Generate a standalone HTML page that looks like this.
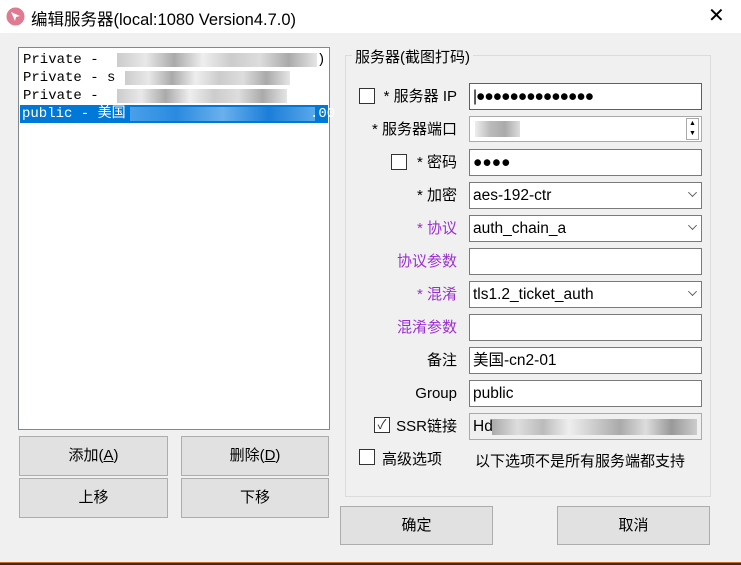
<!DOCTYPE html>
<html><head><meta charset="utf-8"><style>
*{box-sizing:border-box;margin:0;padding:0}
body{width:741px;height:565px;background:#f0f0f0;position:relative;overflow:hidden;font-family:"Liberation Sans","Noto Sans CJK SC",sans-serif;font-size:15px;color:#000}
.a{position:absolute}
.title{left:0;top:0;width:741px;height:33px;background:#fff}
.list{left:18px;top:47px;width:312px;height:383px;background:#fff;border:1px solid #828790;font-family:"Liberation Mono","Noto Sans CJK SC",monospace;font-size:14px}
.it{position:absolute;left:2px;height:18px;line-height:18px;width:308px;padding-left:2px}
.blur{position:absolute;height:14px;background:linear-gradient(90deg,#ccc,#e8e8e8,#aaa,#eee,#ccc,#ddd,#aaa,#e5e5e5)}
.btn{position:absolute;background:#e1e1e1;border:1px solid #adadad;text-align:center;font-size:15px}
.fld{position:absolute;left:469px;width:233px;height:27px;background:#fff;border:1px solid #7a7a7a;line-height:25px;padding-left:3px;font-size:15.5px}
.lbl{position:absolute;right:284px;font-size:15px;height:27px;line-height:27px;white-space:nowrap}
.p{color:#9a30d0}
.chk{position:absolute;width:16px;height:16px;border:1px solid #333;background:#fff}
.dd{position:absolute;right:5px;top:6px;width:7px;height:7px;border-right:1px solid #555;border-bottom:1px solid #555;transform:rotate(45deg) scale(.9)}
</style></head><body>
<div class="a title"></div>
<svg class="a" style="left:6px;top:7px" width="19" height="19"><circle cx="9.5" cy="9.5" r="9" fill="#e07a90"/><path d="M5 5l9 4-4 1-1 4z" fill="#fff"/></svg>
<div class="a" style="left:31px;top:6px;font-size:16.5px">编辑服务器(local:1080 Version4.7.0)</div>
<div class="a" style="left:708px;top:3px;font-size:20px;font-weight:300">✕</div>

<div class="a list">
<div class="it" style="top:3px">Private - <span class="blur" style="left:96px;top:2px;width:200px"></span><span style="position:absolute;left:296px">)</span></div>
<div class="it" style="top:21px">Private - s<span class="blur" style="left:104px;top:2px;width:165px"></span></div>
<div class="it" style="top:39px">Private - <span class="blur" style="left:96px;top:2px;width:170px"></span></div>
<div class="it" style="top:57px;background:#0078d7;color:#fff;left:1px">public - 美国<span style="position:absolute;left:110px;top:2px;width:185px;height:14px;background:linear-gradient(90deg,#4aa0e8,#2a8ae0,#6ab0ec,#1c7ed8,#5aa8ea)"></span><span style="position:absolute;left:290px">.00</span></div>
</div>

<div class="btn" style="left:19px;top:436px;width:149px;height:40px;line-height:38px">添加(<u>A</u>)</div>
<div class="btn" style="left:181px;top:436px;width:148px;height:40px;line-height:38px">删除(<u>D</u>)</div>
<div class="btn" style="left:19px;top:478px;width:149px;height:40px;line-height:38px">上移</div>
<div class="btn" style="left:181px;top:478px;width:148px;height:40px;line-height:38px">下移</div>

<div class="a" style="left:345px;top:55px;width:366px;height:442px;border:1px solid #dcdcdc"></div>
<div class="a" style="left:352px;top:46px;padding:0 3px;background:#f0f0f0;font-size:15px">服务器(截图打码)</div>

<div class="chk" style="left:359px;top:88px"></div>
<div class="lbl" style="top:83px">* 服务器 IP</div>
<div class="fld" style="top:83px;border-color:#0078d7;letter-spacing:-1px">|●●●●●●●●●●●●●●</div>
<div class="lbl" style="top:116px">* 服务器端口</div>
<div class="fld" style="top:116px;height:26px;border-color:#aaa"><span style="position:absolute;left:5px;top:4px;width:45px;height:16px;background:linear-gradient(90deg,#eee,#bbb,#aaa,#ddd)"></span><span style="position:absolute;right:2px;top:1px;width:13px;height:22px;border:1px solid #aaa;font-size:7px;line-height:10px;text-align:center">▲<br>▼</span></div>
<div class="chk" style="left:391px;top:154px"></div>
<div class="lbl" style="top:149px">* 密码</div>
<div class="fld" style="top:149px">●●●●</div>
<div class="lbl" style="top:182px">* 加密</div>
<div class="fld" style="top:182px">aes-192-ctr<div class="dd"></div></div>
<div class="lbl p" style="top:215px">* 协议</div>
<div class="fld" style="top:215px">auth_chain_a<div class="dd"></div></div>
<div class="lbl p" style="top:248px">协议参数</div>
<div class="fld" style="top:248px"></div>
<div class="lbl p" style="top:281px">* 混淆</div>
<div class="fld" style="top:281px">tls1.2_ticket_auth<div class="dd"></div></div>
<div class="lbl p" style="top:314px">混淆参数</div>
<div class="fld" style="top:314px"></div>
<div class="lbl" style="top:347px">备注</div>
<div class="fld" style="top:347px">美国-cn2-01</div>
<div class="lbl" style="top:380px">Group</div>
<div class="fld" style="top:380px">public</div>
<div class="chk" style="left:374px;top:417px;font-size:13px;line-height:14px;text-align:center;color:#333">✓</div>
<div class="lbl" style="top:413px">SSR链接</div>
<div class="fld" style="top:413px;background:#f0f0f0;border-color:#aaa">Hd<span style="position:absolute;left:22px;top:5px;width:205px;height:16px;background:linear-gradient(90deg,#aaa,#ddd,#bbb,#eee,#ccc,#aaa,#ddd,#999,#ccc)"></span></div>
<div class="chk" style="left:359px;top:449px"></div>
<div class="a" style="left:382px;top:448px;font-size:15px">高级选项</div>
<div class="a" style="left:475px;top:450px;font-size:15px">以下选项不是所有服务端都支持</div>

<div class="btn" style="left:340px;top:506px;width:153px;height:39px;line-height:37px">确定</div>
<div class="btn" style="left:557px;top:506px;width:153px;height:39px;line-height:37px">取消</div>
<div class="a" style="left:0;top:562px;width:741px;height:3px;background:#3a2a20;border-top:1px solid #c86a20"></div>
</body></html>
